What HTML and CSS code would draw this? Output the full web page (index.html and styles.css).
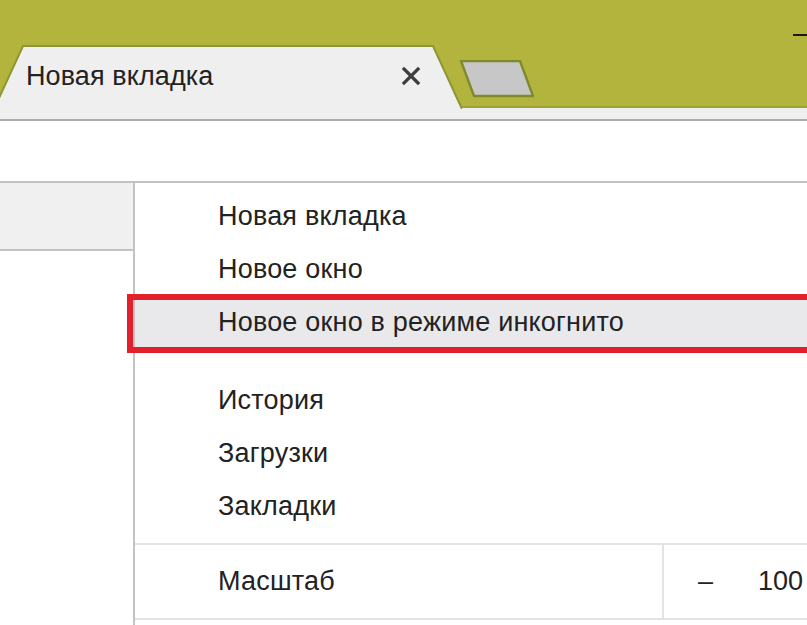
FILE: index.html
```html
<!DOCTYPE html>
<html lang="ru">
<head>
<meta charset="utf-8">
<title>Chrome menu</title>
<link rel="stylesheet" href="styles.css">
</head>
<body>
<div class="window">
  <div class="titlebar">
    <div class="tab">
      <svg class="tab-shape" viewBox="0 0 468 64" width="468" height="64" aria-hidden="true">
        <path d="M0 64 L29 1 L439 1 L468 64 Z" fill="#efefef"/>
        <path d="M0 64 L29 1 L439 1 L468 64" fill="none" stroke="#8c9733" stroke-width="2"/>
      </svg>
      <span class="tab-title">Новая вкладка</span>
      <svg class="tab-close" viewBox="0 0 20 20" width="20" height="20" aria-hidden="true">
        <path d="M3 3 L17 17 M17 3 L3 17" stroke="#3e3e3e" stroke-width="3.2" stroke-linecap="square"/>
      </svg>
    </div>
    <svg class="newtab" viewBox="0 0 76 38" width="76" height="38" aria-hidden="true">
      <path d="M2 1 L61 1 L74 36 L15 36 Z" fill="#c7c7c7" stroke="#7e8b2c" stroke-width="2.4" stroke-linejoin="round"/>
    </svg>
    <div class="minimize"></div>
  </div>
  <div class="tabstrip-bottom"></div>
  <div class="toolbar"></div>
  <div class="content">
    <div class="side">
      <div class="side-box"></div>
    </div>
    <div class="menu">
      <div class="item">Новая вкладка</div>
      <div class="item">Новое окно</div>
      <div class="item highlighted">Новое окно в режиме инкогнито</div>
      <div class="group">
        <div class="item">История</div>
        <div class="item">Загрузки</div>
        <div class="item">Закладки</div>
      </div>
      <div class="zoom-row">
        <div class="zoom-label">Масштаб</div>
        <div class="zoom-controls">
          <span class="zoom-minus">–</span>
          <span class="zoom-value">100</span>
        </div>
      </div>
    </div>
  </div>
</div>
</body>
</html>
```

FILE: styles.css
```css
html, body {
  margin: 0;
  padding: 0;
}
body {
  width: 807px;
  height: 625px;
  overflow: hidden;
  background: #ffffff;
  font-family: "Liberation Sans", Arial, sans-serif;
  color: #222222;
}
.window {
  width: 807px;
  height: 625px;
  overflow: hidden;
  display: flex;
  flex-direction: column;
}
.titlebar {
  height: 108px;
  flex: none;
  background: #b3b43e;
  display: flex;
  align-items: flex-end;
  box-shadow: inset 0 -2px 0 #9aa236;
}
.tab {
  position: relative;
  flex: none;
  width: 468px;
  height: 64px;
  margin-left: -6px;
  margin-bottom: -1px;
  display: flex;
  align-items: center;
  box-sizing: border-box;
  padding-left: 32px;
  padding-bottom: 2px;
}
.tab-shape {
  position: absolute;
  left: 0;
  top: 0;
}
.tab-title {
  position: relative;
  font-size: 27px;
  letter-spacing: 0.1px;
  flex: 1;
}
.tab-close {
  position: relative;
  margin-right: 41px;
}
.newtab {
  flex: none;
  margin-left: -3px;
  margin-bottom: 10px;
}
.minimize {
  flex: none;
  margin-left: auto;
  align-self: flex-start;
  margin-top: 34px;
  width: 14px;
  height: 2px;
  background: #1a1a1a;
}
.tabstrip-bottom {
  height: 11px;
  flex: none;
  background: #efefef;
  border-bottom: 2px solid #ababab;
}
.toolbar {
  height: 60px;
  flex: none;
  background: #ffffff;
  border-bottom: 2px solid #c3c3c3;
}
.content {
  flex: 1;
  display: flex;
}
.side {
  width: 133px;
  flex: none;
}
.side-box {
  height: 66px;
  background: #f0f0f0;
  border-bottom: 2px solid #c3c3c3;
}
.menu {
  flex: 1;
  border-left: 2px solid #c3c3c3;
  padding-top: 7px;
}
.item {
  height: 53px;
  display: flex;
  align-items: center;
  padding-left: 83px;
  font-size: 27px;
  letter-spacing: 0.2px;
}
.highlighted {
  position: relative;
  background: #e9e9eb;
}
.highlighted::after {
  content: "";
  position: absolute;
  left: -8px;
  right: -20px;
  top: -2px;
  bottom: -4px;
  border: 6px solid #e2202b;
}
.group {
  margin-top: 25px;
}
.zoom-row {
  margin-top: 10px;
  height: 73px;
  border-top: 2px solid #e3e3e3;
  border-bottom: 2px solid #e3e3e3;
  display: flex;
  font-size: 27px;
}
.zoom-label {
  width: 529px;
  flex: none;
  box-sizing: border-box;
  padding-left: 83px;
  display: flex;
  align-items: center;
  border-right: 2px solid #e3e3e3;
  letter-spacing: 0.2px;
}
.zoom-controls {
  display: flex;
  align-items: center;
  padding-left: 34px;
  white-space: nowrap;
}
.zoom-minus {
  width: 60px;
}
```
